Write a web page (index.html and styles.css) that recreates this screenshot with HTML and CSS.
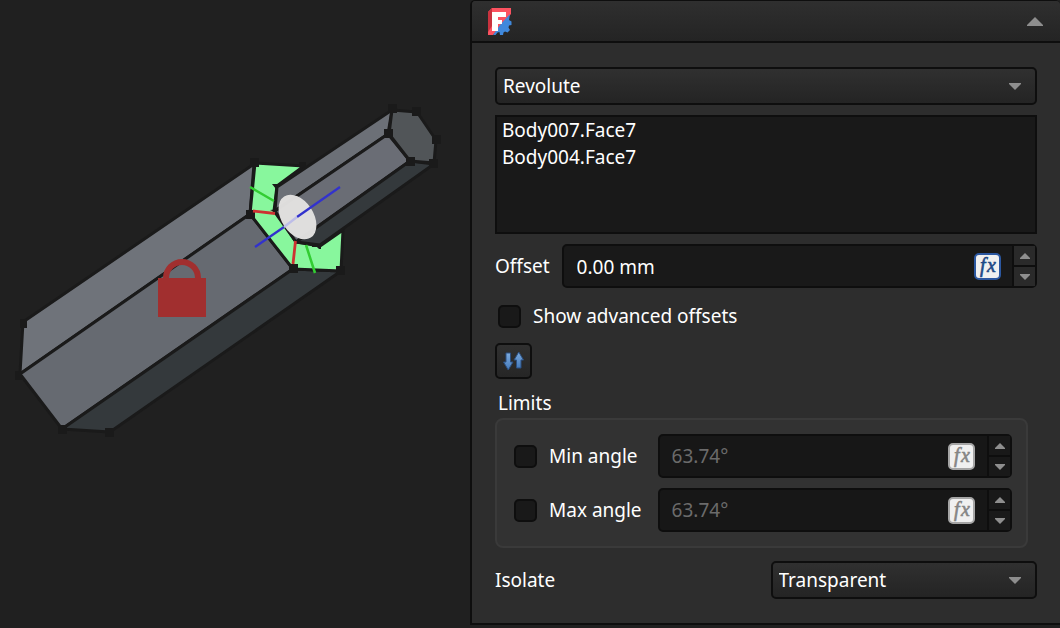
FILE: index.html
```html
<!DOCTYPE html>
<html lang="en">
<head>
<meta charset="utf-8">
<title>Joint</title>
<link rel="stylesheet" href="styles.css">
</head>
<body>
<main class="workspace">
  <div class="viewport">
    <svg class="scene" viewBox="0 0 470 628" preserveAspectRatio="xMinYMin meet" role="img" aria-label="3D view">
      <!-- large body -->
      <g stroke="#1a1a1a" stroke-width="3" stroke-linejoin="round">
        <path fill="#6f737a" d="M23 322L254 164L250 214L20 374Z"/>
        <path fill="#666a71" d="M20 374L250 214L293 269L62 429Z"/>
        <path fill="#34393c" d="M62 429L293 269L341 271L110 432Z"/>
        <path fill="#88f79d" d="M255 163L304 166L277 186L274 211L296 242L320 246L343 230L341 271L293 269L250 214Z"/>
      </g>
      <path fill="#1a1a1a" d="M272 184h9v5h-5zM270 210l9-1v5zM312 244h9v5h-2l-2-2h-5z"/>
      <!-- small body -->
      <g stroke="#1a1a1a" stroke-width="3" stroke-linejoin="round">
        <path fill="#6c7077" d="M277 187L392 110L388 134L275 211Z"/>
        <path fill="#6a6d75" d="M275 211L388 134L410 161L296 242Z"/>
        <path fill="#34393c" d="M296 242L410 161L434 164L320 245Z"/>
        <path fill="#515558" d="M392 110L417 112L436 140L434 163L410 161L389 134Z"/>
      </g>
      <path fill="#1a1a1a" d="M388 104h9v9h-9zM412 107h9v9h-9zM432 135h9v9h-9zM429 159h9v9h-9zM406 157h9v9h-9zM384 129h9v9h-9zM250 158h9v9h-9zM246 210h9v9h-9zM289 264h9v9h-9zM336 266h9v9h-9zM20 319h7v9h-7zM15 371h7v9h-7zM58 425h9v9h-9zM105 428h9v9h-9zM299 162h7v5h-7z"/>
      <ellipse cx="297.5" cy="217" rx="24.5" ry="16" transform="rotate(57 297.5 217)" fill="#e1e0df" fill-opacity=".98"/>
      <g fill="none" stroke-width="2.8">
        <path stroke="#3232cd" stroke-width="2.3" d="M255 247L284 227M297 217L340 187"/>
        <path stroke="#bdbde8" stroke-width="2.3" d="M284 227L297 217"/>
        <path stroke="#cd3232" d="M253 211L275 213.500M295.500 241L293 264"/>
        <path stroke="#32cd32" stroke-width="2.5" d="M250 187L274 201M306 245L315 273"/>
      </g>
      <!-- padlock -->
      <rect x="158" y="278" width="48" height="39" fill="#a12f2f"/>
      <path d="M166 279v-1a16 16 0 0 1 32 0v1" fill="none" stroke="#a12f2f" stroke-width="6"/>
    </svg>
  </div>

  <section class="panel">
    <header class="panel-header">
      <svg class="logo" viewBox="0 0 24 27" aria-hidden="true">
        <path fill="#fb5260" d="M4 0h19v6L5 27H0V4z"/>
        <path fill="#c9323e" d="M0 4L4 0v18l-4 6z"/>
        <path fill="#3f88dc" d="M5 27L12 17L22 6L21 12L23.500 13.500v3.500L21 17.500L20.500 19.500L22 22l-2.500 2.500-2.500-1-1.500 1-.500 2.500h-3L11.500 24 9.500 24.500 7.500 27z"/>
        <rect x="4" y="4" width="6" height="19" fill="#fff"/>
        <rect x="4" y="4" width="14" height="5" fill="#fff"/>
        <rect x="4" y="12" width="10" height="4" fill="#fff"/>
      </svg>
      <button class="collapse" type="button" aria-label="Collapse"><svg viewBox="0 0 16 9" width="16" height="9"><path d="M8 0L16 8v1H0V8z"/></svg></button>
    </header>

    <form class="panel-body">
      <div class="combo">
        <select aria-label="Joint type"><option>Revolute</option></select>
        <svg class="combo-arrow" viewBox="0 0 12 7" aria-hidden="true"><path d="M0 0h12v1L6 7L0 1z"/></svg>
      </div>

      <ul class="references">
        <li>Body007.Face7</li>
        <li>Body004.Face7</li>
      </ul>

      <div class="offset-row">
        <label for="offset">Offset</label>
        <div class="quantity">
          <input id="offset" type="text" value="0.00 mm">
          <button class="fx" type="button" aria-label="Edit expression"><svg viewBox="0 0 23 23"><text y="17"><tspan x="4">f</tspan><tspan x="11">x</tspan></text></svg></button>
          <div class="stepper">
            <button type="button" aria-label="Increase"><svg viewBox="0 0 10 6"><path d="M5 0L10 5v1H0V5z"/></svg></button>
            <button type="button" aria-label="Decrease"><svg viewBox="0 0 10 6"><path d="M0 0h10v1L5 6L0 1z"/></svg></button>
          </div>
        </div>
      </div>

      <div class="check-row">
        <input id="advanced" type="checkbox"><label for="advanced">Show advanced offsets</label>
      </div>

      <button class="reverse" type="button" aria-label="Reverse direction">
        <svg viewBox="0 0 22 20" width="22" height="20">
          <defs><linearGradient id="arrow-fill" x1="0" y1="0" x2="0" y2="1"><stop offset="0" stop-color="#7dabde"/><stop offset="1" stop-color="#4379ba"/></linearGradient></defs>
          <g fill="url(#arrow-fill)" stroke="#2b4f80" stroke-width="1"><path d="M3 2h4.500v9H10L5.250 19L.500 11H3z"/><path d="M13.500 17H18V9H20.500L15.750 1L11 9h2.500z"/></g>
        </svg>
      </button>

      <fieldset class="limits">
        <legend>Limits</legend>
        <div class="limits-grid">
          <div class="limit-check"><input id="min" type="checkbox"><label for="min">Min angle</label></div>
          <div class="quantity is-disabled">
            <input type="text" value="63.74°" aria-label="Min angle value" disabled>
            <button class="fx" type="button" aria-label="Edit expression" disabled><svg viewBox="0 0 23 23"><text y="17"><tspan x="4">f</tspan><tspan x="11">x</tspan></text></svg></button>
            <div class="stepper">
              <button type="button" aria-label="Increase" disabled><svg viewBox="0 0 10 6"><path d="M5 0L10 5v1H0V5z"/></svg></button>
              <button type="button" aria-label="Decrease" disabled><svg viewBox="0 0 10 6"><path d="M0 0h10v1L5 6L0 1z"/></svg></button>
            </div>
          </div>
          <div class="limit-check"><input id="max" type="checkbox"><label for="max">Max angle</label></div>
          <div class="quantity is-disabled">
            <input type="text" value="63.74°" aria-label="Max angle value" disabled>
            <button class="fx" type="button" aria-label="Edit expression" disabled><svg viewBox="0 0 23 23"><text y="17"><tspan x="4">f</tspan><tspan x="11">x</tspan></text></svg></button>
            <div class="stepper">
              <button type="button" aria-label="Increase" disabled><svg viewBox="0 0 10 6"><path d="M5 0L10 5v1H0V5z"/></svg></button>
              <button type="button" aria-label="Decrease" disabled><svg viewBox="0 0 10 6"><path d="M0 0h10v1L5 6L0 1z"/></svg></button>
            </div>
          </div>
        </div>
      </fieldset>

      <div class="isolate-row">
        <label for="isolate">Isolate</label>
        <div class="combo">
          <select id="isolate"><option>Transparent</option></select>
          <svg class="combo-arrow" viewBox="0 0 12 7" aria-hidden="true"><path d="M0 0h12v1L6 7L0 1z"/></svg>
        </div>
      </div>
    </form>
  </section>
</main>
</body>
</html>
```
FILE: styles.css
```css
* {
  box-sizing: border-box;
}

body {
  margin: 0;
  min-height: 100vh;
  background: #202020;
  color: #fff;
  font: 19px/26px "Noto Sans", sans-serif;
}

button,
input,
select {
  margin: 0;
  color: inherit;
  font: inherit;
}

button {
  padding: 0;
  border: 0;
  background: none;
}

.workspace {
  display: grid;
  grid-template-columns: 47fr 59fr;
  align-items: start;
}

.scene {
  display: block;
  width: 100%;
}

.panel {
  border: solid #0e0e0e;
  border-width: 1px 0 2px 2px;
  border-radius: 5px 5px 0 0;
  background: #2d2d2d;
}

.panel-header {
  display: flex;
  align-items: center;
  justify-content: space-between;
  height: 42px;
  padding: 0 17px 0 16px;
  border-bottom: 2px solid #0e0e0e;
  border-radius: 4px 4px 0 0;
  background: linear-gradient(#2f2f2f, #242424);
}

.logo {
  width: 24px;
  height: 27px;
}

.collapse {
  display: flex;
}

.collapse path,
.combo-arrow path,
.stepper path {
  fill: #8e8e8e;
}

.panel-body {
  display: flex;
  flex-direction: column;
  padding: 24px 23px;
}

.combo {
  display: grid;
  align-items: center;
}

.combo select {
  grid-area: 1 / 1;
  width: 100%;
  height: 38px;
  padding: 0 6px;
  border: 2px solid #0e0e0e;
  border-radius: 5px;
  background: linear-gradient(#303030, #242424);
  appearance: none;
}

.combo-arrow {
  grid-area: 1 / 1;
  justify-self: end;
  width: 12px;
  height: 7px;
  margin-right: 16px;
  pointer-events: none;
}

.references {
  height: 119px;
  margin: 10px 0;
  padding: 0 5px;
  border: 2px solid #0e0e0e;
  background: #191919;
  line-height: 27px;
  list-style: none;
}

.offset-row {
  display: flex;
  align-items: center;
  gap: 12px;
}

.quantity {
  display: flex;
  flex: 1;
  align-items: center;
  min-width: 0;
  height: 44px;
  border: 2px solid #0e0e0e;
  border-radius: 5px;
  background: #191919;
}

.quantity input {
  flex: 1;
  min-width: 0;
  height: 100%;
  padding: 1px 13px 0;
  border: 0;
  background: none;
}

.fx {
  display: flex;
  width: 27px;
  height: 27px;
  margin-right: 11px;
  border: 2px solid #2b57a0;
  border-radius: 5px;
  background: #f0f0f0;
}

.fx svg {
  width: 100%;
  height: 100%;
  overflow: visible;
}

.fx text {
  fill: #204a87;
  stroke: #204a87;
  stroke-width: 0.6;
  font: italic 20px "Liberation Serif", serif;
}

.stepper {
  display: grid;
  grid-template-rows: 1fr 1fr;
  gap: 2px;
  align-self: stretch;
  width: 23px;
  border-left: 2px solid #0e0e0e;
  background: #0e0e0e;
}

.stepper button {
  display: grid;
  place-items: center;
  background: #2a2a2a;
}

.stepper svg {
  width: 10px;
  height: 6px;
}

.is-disabled {
  background: #171717;
}

.is-disabled input {
  padding: 0 12px;
  color: #6b6b6b;
}

.is-disabled .fx {
  margin-right: 12px;
  border-color: #a5a5a5;
}

.is-disabled .fx text {
  fill: #858585;
  stroke: #858585;
}

.is-disabled .stepper button {
  background: #191919;
}

input[type="checkbox"] {
  flex: none;
  width: 23px;
  height: 23px;
  border: 2px solid #0e0e0e;
  border-radius: 5px;
  background: #191919;
  appearance: none;
}

.check-row {
  display: flex;
  align-items: center;
  gap: 12px;
  margin: 15px 3px 14px;
}

.reverse {
  display: grid;
  place-items: center;
  width: 37px;
  height: 36px;
  border: 2px solid #0e0e0e;
  border-radius: 5px;
  background: linear-gradient(#303030, #262626);
}

.limits {
  min-width: 0;
  margin: 11px 9px 0 0;
  padding: 0;
  border: 0;
}

.limits legend {
  padding: 0 3px;
}

.limits-grid {
  display: grid;
  grid-template-columns: auto 1fr;
  gap: 10px 16px;
  margin-top: 2px;
  padding: 14px 14px 14px 17px;
  border: 2px solid #3a3a3a;
  border-radius: 8px;
  background: #323232;
}

.limit-check {
  display: flex;
  align-items: center;
  gap: 12px;
}

.isolate-row {
  display: grid;
  grid-template-columns: 1fr 1fr;
  align-items: center;
  gap: 9px;
  margin-top: 13px;
}
```
